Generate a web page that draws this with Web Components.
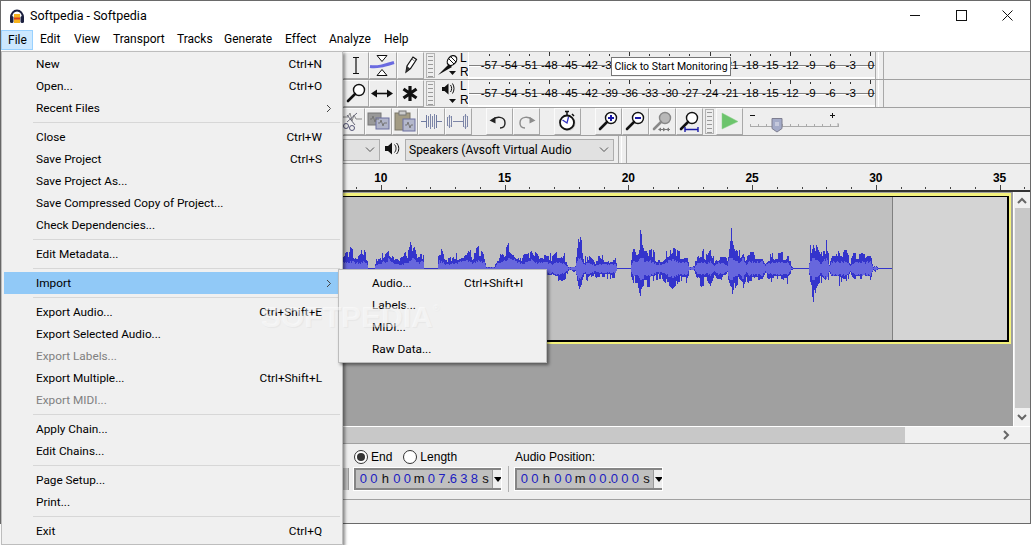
<!DOCTYPE html>
<html lang="en">

<head>
  <meta charset="UTF-8">
  <title>Softpedia - Softpedia</title>
  <style>
    html, body { margin: 0; background: #fff; height: 545px; overflow: hidden; }
    audio-window { font-family: Roboto, "Liberation Sans", sans-serif; }
  </style>
</head>

<body>
  <audio-window>
    <title-bar>Softpedia - Softpedia</title-bar>
    <menu-bar>
      <menu-title w="32" active>File</menu-title>
      <menu-title w="34">Edit</menu-title>
      <menu-title w="39">View</menu-title>
      <menu-title w="64">Transport</menu-title>
      <menu-title w="47">Tracks</menu-title>
      <menu-title w="61">Generate</menu-title>
      <menu-title w="44">Effect</menu-title>
      <menu-title w="55">Analyze</menu-title>
      <menu-title w="40">Help</menu-title>
    </menu-bar>

    <tool-row first>
      <tool-btn icon="ibeam" w="26"></tool-btn>
      <tool-btn icon="envelope" w="28"></tool-btn>
      <tool-btn icon="pencil" w="27"></tool-btn>
      <tool-grip></tool-grip>
      <meter-source icon="mic"></meter-source>
      <level-meter hide="-36,-33,-30,-27,-24"></level-meter>
      <tool-divider></tool-divider>
    </tool-row>
    <tool-row>
      <tool-btn icon="zoom" w="26"></tool-btn>
      <tool-btn icon="shift" w="28"></tool-btn>
      <tool-btn icon="multi" w="27"></tool-btn>
      <tool-grip></tool-grip>
      <meter-source icon="speaker"></meter-source>
      <level-meter></level-meter>
      <tool-divider></tool-divider>
    </tool-row>
    <tool-row>
      <tool-btn icon="cut" w="22"></tool-btn>
      <tool-btn icon="copy" w="27"></tool-btn>
      <tool-btn icon="paste" w="26"></tool-btn>
      <tool-btn icon="trim" w="27"></tool-btn>
      <tool-btn icon="silence" w="27"></tool-btn>
      <tool-btn icon="undo" w="27" gap="14"></tool-btn>
      <tool-btn icon="redo" w="27"></tool-btn>
      <tool-btn icon="timer" w="27" gap="14"></tool-btn>
      <tool-btn icon="zoomin" w="27" gap="14"></tool-btn>
      <tool-btn icon="zoomout" w="27"></tool-btn>
      <tool-btn icon="fitsel" w="27"></tool-btn>
      <tool-btn icon="fitproj" w="27"></tool-btn>
      <tool-grip></tool-grip>
      <tool-btn icon="play" w="27"></tool-btn>
      <speed-slider></speed-slider>
    </tool-row>
    <tool-row>
      <device-combo w="37"></device-combo>
      <tool-btn icon="speakersmall" w="25" flat></tool-btn>
      <device-combo w="209">Speakers (Avsoft Virtual Audio</device-combo>
      <tool-divider wide></tool-divider>
    </tool-row>

    <time-ruler></time-ruler>
    <track-panel></track-panel>
    <h-scroll></h-scroll>
    <selection-bar></selection-bar>
    <status-bar></status-bar>

    <click-tip>Click to Start Monitoring</click-tip>

    <popup-menu x="1" y="51" w="342" h="494" pad="1">
      <menu-item key="Ctrl+N">New</menu-item>
      <menu-item key="Ctrl+O">Open...</menu-item>
      <menu-item sub>Recent Files</menu-item>
      <menu-sep></menu-sep>
      <menu-item key="Ctrl+W">Close</menu-item>
      <menu-item key="Ctrl+S">Save Project</menu-item>
      <menu-item>Save Project As...</menu-item>
      <menu-item>Save Compressed Copy of Project...</menu-item>
      <menu-item>Check Dependencies...</menu-item>
      <menu-sep></menu-sep>
      <menu-item>Edit Metadata...</menu-item>
      <menu-sep></menu-sep>
      <menu-item sub active>Import</menu-item>
      <menu-sep></menu-sep>
      <menu-item key="Ctrl+Shift+E">Export Audio...</menu-item>
      <menu-item>Export Selected Audio...</menu-item>
      <menu-item disabled>Export Labels...</menu-item>
      <menu-item key="Ctrl+Shift+L">Export Multiple...</menu-item>
      <menu-item disabled>Export MIDI...</menu-item>
      <menu-sep></menu-sep>
      <menu-item>Apply Chain...</menu-item>
      <menu-item>Edit Chains...</menu-item>
      <menu-sep></menu-sep>
      <menu-item>Page Setup...</menu-item>
      <menu-item>Print...</menu-item>
      <menu-sep></menu-sep>
      <menu-item key="Ctrl+Q">Exit</menu-item>
    </popup-menu>

    <popup-menu x="338" y="269" w="209" h="94" pad="2">
      <menu-item key="Ctrl+Shift+I" indent="31" keyx="122">Audio...</menu-item>
      <menu-item indent="31">Labels...</menu-item>
      <menu-item indent="31">MIDI...</menu-item>
      <menu-item indent="31">Raw Data...</menu-item>
    </popup-menu>

    <water-mark>SOFTPEDIA</water-mark>
  </audio-window>

  <script>
    const ARIAL = '"Liberation Sans", Arial, sans-serif'

    function shadow(el, css, html) {
      const root = el.attachShadow({ mode: 'open' })
      root.innerHTML = '<style>' + css + '</style>' + html
      return root
    }

    // toolbar pictures, drawn in a 26x27 box
    const glass = (c, fill) => `<circle cx="16" cy="10" r="5.5" fill="${fill || '#fff'}" stroke="${c}" stroke-width="1.4"/><path d="M12 14L5 21" stroke="${c}" stroke-width="2.6" stroke-linecap="round"/>`
    const ICONS = {
      ibeam: '<path d="M10 5.5h6M13 5.5v16M10 21.5h6" stroke="#111" stroke-width="1.2" fill="none"/>',
      envelope: '<path d="M8 3.5h10l-5 6zM8 23.5h10l-5-6z" fill="#fff" stroke="#111"/><path d="M1 14.5c8 1 14-1 24-4" stroke="#6a6ae0" stroke-width="3" fill="none"/>',
      pencil: '<path d="M9 20l1-6 6-9 3.500 2.500-6 9z" fill="#fff" stroke="#111" stroke-width="1.2"/><path d="M9 20l4-3.500-3-2.500z" fill="#333"/><path d="M15 7l3 2.500" stroke="#777"/>',
      zoom: glass('#111'),
      shift: '<path d="M6 13.500h14" stroke="#111" stroke-width="1.6"/><path d="M2 13.500l6-4v8zM24 13.500l-6-4v8z" fill="#111"/>',
      multi: '<path d="M13 6v15M6.500 9l13 9M19.500 9l-13 9" stroke="#111" stroke-width="3.200"/>',
      cut: '<path d="M0 9h5l2-4 2 8 2-6 2 4h6" stroke="#888" fill="none"/><path d="M4 14l10-9M4 7l8 10" stroke="#667" /><circle cx="3" cy="18" r="2.500" fill="none" stroke="#557"/><circle cx="9" cy="20" r="2.500" fill="none" stroke="#557"/>',
      copy: '<rect x="3" y="5" width="13" height="12" fill="#999" stroke="#777"/><rect x="11" y="10" width="13" height="11" fill="#b0b4c8" stroke="#6a6fa0"/><path d="M5 11h2l1-3 2 6 1-3h3M13 15h2l1-3 2 6 1-3h3" stroke="#777" fill="none"/>',
      paste: '<rect x="3" y="5" width="15" height="17" fill="#a39c84" stroke="#7a7668"/><rect x="7" y="3" width="7" height="4" fill="#ccc" stroke="#777"/><rect x="11" y="11" width="12" height="12" fill="#b4b8cc" stroke="#6a6fa0"/><path d="M13 17h2l1-3 2 6 1-3h2" stroke="#777" fill="none"/>',
      trim: '<path d="M3 13.500h5M19 13.500h5M8.500 7v13M18.500 7v13" stroke="#6f7aa0" fill="none"/><path d="M10.500 8v11M12.500 6v15M14.500 8v11M16.500 6v15" stroke="#7d86a8" fill="none"/>',
      silence: '<path d="M2.500 9v9M4.500 7v13M6.500 8v11M8 13.500h10M18.500 8v11M20.500 6v15M22.500 8v11" stroke="#7d86a8" fill="none"/><path d="M3.500 9h2M19.500 8h2M3.500 18h2M19.500 19h2" stroke="#7d86a8"/>',
      undo: '<path d="M6 12c4-4 13-4 13 3 0 3-2 5-5 5" stroke="#222" stroke-width="1.400" fill="none"/><path d="M3.500 12.500l6-3.500v6.500z" fill="#222"/>',
      redo: '<path d="M20 12c-4-4-13-4-13 3 0 3 2 5 5 5" stroke="#8c8c8c" stroke-width="1.400" fill="none"/><path d="M22.500 12.500l-6-3.500v6.500z" fill="#8c8c8c"/>',
      timer: '<circle cx="14" cy="15.500" r="7.500" fill="#aaa" opacity=".5"/><circle cx="13" cy="14.500" r="7" fill="#fff" stroke="#111" stroke-width="1.800"/><path d="M11 3.500h4M13 4v3M18 6l2 2" stroke="#111" stroke-width="1.500"/><path d="M8.500 12l4.500 3 1.500-6" stroke="#3030c0" stroke-width="1.300" fill="none"/>',
      zoomin: glass('#111') + '<path d="M13 10h6M16 7v6" stroke="#1818a8" stroke-width="2"/>',
      zoomout: glass('#111') + '<path d="M13 10h6" stroke="#1818a8" stroke-width="2"/>',
      fitsel: glass('#888', '#b8b8b8') + '<path d="M10 21.500h11" stroke="#777"/><path d="M9 21.500l3-2v4zM17 21.500l-3-2v4zM17 21.500l3-2v4z" fill="#777"/>',
      fitproj: glass('#111') + '<path d="M9 21.500h13M9 19v5M22 19v5" stroke="#1818a8" stroke-width="1.400"/>',
      play: '<path d="M6 5l16 8.500L6 21z" fill="#6cc46c" stroke="#8bd08b" stroke-width=".5"/>',
      speakersmall: '<path d="M6 11h3l4-3.500v12L9 16H6z" fill="#111"/><path d="M15.500 9.500c2 2 2 6 0 8M17.500 8c3 3 3 8 0 11" stroke="#111" fill="none"/>',
      mic: '<path d="M1 23l11-11 3 3z" fill="#111"/><ellipse cx="15" cy="8.500" rx="4" ry="5.500" transform="rotate(42 15 8.500)" fill="#fff" stroke="#111" stroke-width="1.300"/><path d="M12 7l5 5M14 5l5 5" stroke="#111"/><path d="M12 19h7l-3.500 4z" fill="#111"/>',
      speaker: '<path d="M5 7h2.500l4-3.500v11L7.500 11H5z" fill="#111"/><path d="M13.500 5c1.500 2 1.500 5 0 7M15.500 3.500c2 3 2 7 0 10" stroke="#111" fill="none"/><path d="M12 19h7l-3.500 4z" fill="#111"/>'
    }

    // envelope of the recording: [x on the page, peak height]
    const ENVELOPE = [
      [343, 18], [350, 23], [358, 16], [362, 22], [367, 14], [368, 1], [374, 1], [376, 12], [381, 16], [388, 28], [394, 14],
      [400, 12], [408, 20], [412, 35], [416, 18], [423, 20], [424, 1], [437, 1], [439, 25], [445, 14], [452, 14], [458, 18],
      [467, 28], [472, 16], [478, 25], [484, 18], [486, 3], [494, 3], [497, 14], [503, 20], [509, 34], [515, 22], [522, 16],
      [531, 26], [538, 16], [545, 18], [552, 14], [558, 20], [565, 15], [568, 3], [575, 4], [578, 42], [581, 30], [584, 12], [588, 18],
      [594, 10], [598, 14], [604, 13], [615, 13], [617, 1], [630, 1], [632, 20], [637, 20], [640, 42], [644, 24], [650, 23],
      [656, 14], [662, 14], [666, 20], [673, 28], [678, 20], [687, 20], [689, 3], [694, 3], [697, 16], [701, 22], [707, 18],
      [710, 25], [714, 10], [717, 16], [724, 17], [727, 8], [729, 38], [731, 43], [734, 26], [738, 18], [743, 30], [746, 10],
      [748, 21], [762, 20], [765, 9], [768, 16], [788, 20], [791, 3], [793, 1], [808, 1], [810, 24], [813, 43], [816, 26],
      [820, 16], [826, 30], [829, 8], [832, 21], [846, 20], [850, 8], [854, 18], [870, 20], [873, 3], [876, 5], [878, 1], [892, 1]
    ]

    function envelopeAt(x) {
      for (let i = 1; i < ENVELOPE.length; i++) {
        const a = ENVELOPE[i - 1], b = ENVELOPE[i]
        if (x <= b[0]) return a[1] + (b[1] - a[1]) * (x - a[0]) / (b[0] - a[0])
      }
      return 0
    }

    class AudioWindow extends HTMLElement {
      constructor() {
        super()
        shadow(this, `:host { display: flex; flex-direction: column; position: relative; box-sizing: border-box;
          height: 524px; border: 1px solid #6a6a6a; background: #eee; color: #000; }`, '<slot></slot>')
      }
    }

    class TitleBar extends HTMLElement {
      constructor() {
        super()
        shadow(this, `:host { display: flex; align-items: center; height: 29px; background: #fff; font-size: 12.500px; flex: none; }
          .logo { margin: 0 5px 0 8px; }
          .title { flex: 1; margin-top: -1px; }
          .ctl { width: 46px; height: 29px; display: flex; align-items: center; justify-content: center; }
          .ctl svg { display: block; }`,
          `<svg class="logo" width="16" height="16" viewBox="0 0 16 16"><path d="M2 10C2 0 14 0 14 10" fill="none" stroke="#1c2140" stroke-width="2"/><rect x="1" y="8" width="3.500" height="7" rx="1.500" fill="#1c2140"/><rect x="11.500" y="8" width="3.500" height="7" rx="1.500" fill="#1c2140"/><rect x="5" y="6" width="6" height="9" fill="#f6b21c"/><path d="M5 10.500h6" stroke="#d83c1c" stroke-width="2"/></svg>
          <div class="title"><slot></slot></div>
          <div class="ctl"><svg width="11" height="11"><path d="M0 5.500h10" stroke="#111"/></svg></div>
          <div class="ctl"><svg width="11" height="11"><rect x=".5" y=".5" width="10" height="10" fill="none" stroke="#111"/></svg></div>
          <div class="ctl"><svg width="11" height="11"><path d="M.5.500l10 10M10.500.5l-10 10" stroke="#111"/></svg></div>`)
      }
    }

    class MenuBar extends HTMLElement {
      constructor() {
        super()
        shadow(this, ':host { display: flex; height: 21px; background: #fff; flex: none; }', '<slot></slot>')
      }
    }

    class MenuTitle extends HTMLElement {
      constructor() {
        super()
        const active = this.hasAttribute('active')
        shadow(this, `:host { display: block; box-sizing: border-box; height: 20px; width: ${this.getAttribute('w')}px;
            padding-left: 7px; font-size: 12px; line-height: 19px; white-space: nowrap; margin-top: 0;
            ${active ? 'background: #cce8ff; border: 1px solid #99d1ff; padding-left: 6px; line-height: 18px;' : ''} }`,
          '<slot></slot>')
      }
    }

    class ToolRow extends HTMLElement {
      constructor() {
        super()
        shadow(this, `:host { display: flex; flex: none; box-sizing: border-box; height: ${this.hasAttribute('first') ? 29 : 28}px;
            padding-left: 342px; background: #eee; border-bottom: 1px solid #a0a0a0;
            ${this.hasAttribute('first') ? 'border-top: 1px solid #b4b4b4;' : ''} }`, '<slot></slot>')
      }
    }

    class ToolBtn extends HTMLElement {
      constructor() {
        super()
        const flat = this.hasAttribute('flat')
        shadow(this, `:host { display: block; flex: none; box-sizing: border-box; height: 27px;
            width: ${this.getAttribute('w')}px; margin-left: ${this.getAttribute('gap') || 0}px;
            ${flat ? '' : 'border-top: 1px solid #fbfbfb; border-left: 1px solid #fbfbfb; border-right: 1px solid #a8a8a8; border-bottom: 1px solid #a8a8a8;'} }
            svg { display: block; margin: -1px 0 0 -1px; }`,
          `<svg width="26" height="27" viewBox="0 0 26 27">${ICONS[this.getAttribute('icon')]}</svg>`)
      }
    }

    class ToolGrip extends HTMLElement {
      constructor() {
        super()
        shadow(this, `:host { display: block; flex: none; box-sizing: border-box; width: 9px; height: 25px; margin: 1px 2px 0 2px;
            border: 1px solid #b4b4b4;
            background: repeating-linear-gradient(#eee 0 2px, #9a9a9a 2px 3px, #eee 3px 4px) 1px 0 / 5px 100% no-repeat; }`, '')
      }
    }

    class ToolDivider extends HTMLElement {
      constructor() {
        super()
        shadow(this, `:host { display: block; flex: none; box-sizing: border-box; height: 27px; width: 9px;
            margin-left: ${this.hasAttribute('wide') ? 4 : 0}px; border-left: 1px solid #a8a8a8; border-right: 1px solid #a8a8a8;
            background: linear-gradient(#fff, #fff) 2px 0 / 1px 100% no-repeat; }`, '')
      }
    }

    class MeterSource extends HTMLElement {
      constructor() {
        super()
        shadow(this, `:host { display: flex; flex: none; width: 31px; height: 27px; font: 12px ${ARIAL}; }
            svg { display: block; flex: none; }
            .lr { display: flex; flex-direction: column; justify-content: space-between; line-height: 13px; }`,
          `<svg width="23" height="27" viewBox="0 0 23 27">${ICONS[this.getAttribute('icon')]}</svg>
           <div class="lr"><span>L</span><span>R</span></div>`)
      }
    }

    class LevelMeter extends HTMLElement {
      constructor() {
        super()
        const hide = (this.getAttribute('hide') || '').split(',')
        let cells = ''
        for (let n = 57; n >= 0; n -= 3) {
          const text = n == 0 ? '0' : '-' + n
          const tall = n % 12 == 0
          cells += `<div class="cell"><i class="${tall ? 'tall' : ''}"></i><span>${hide.includes(text) ? '' : text}</span></div>`
        }
        shadow(this, `:host { display: flex; flex: none; box-sizing: border-box; width: 407px; height: 27px; padding-left: 10px;
            font: 11.500px ${ARIAL}; border-bottom: 2px solid #fff; border-left: 1px solid #fff;
            background: linear-gradient(#808080, #808080) 0 13px / 100% 1px no-repeat, linear-gradient(#fff, #fff) 0 14px / 100% 1px no-repeat; }
            .cell { flex: none; width: 20.100px; height: 25px; display: flex; flex-direction: column; align-items: center; }
            i { display: block; width: 1px; height: 2px; margin-top: 2px; background: #333; flex: none; }
            i.tall { height: 4px; margin-top: 0; }
            .cell span { line-height: 13px; margin-top: 3px; white-space: nowrap; height: 13px; }
            i.tall + span { margin-top: 3px; }`, cells)
      }
    }

    class SpeedSlider extends HTMLElement {
      constructor() {
        super()
        let ticks = ''
        for (let i = 0; i < 12; i++) ticks += `<path d="M${0.5 + i * 8} 16v3" stroke="#aaa"/>`
        shadow(this, ':host { display: block; flex: none; margin-left: 7px; width: 90px; height: 27px; } svg { display: block; }',
          `<svg width="90" height="27">
            <path d="M0 7.500h5" stroke="#111"/>
            <path d="M80 7.500h5M82.500 5v5" stroke="#111"/>
            ${ticks}
            <path d="M0 18.500h88M88 15v4" stroke="#aaa"/>
            <path d="M22 10.500h10v10l-5 3.500-5-3.500z" fill="#a4abc8" stroke="#7e7e90"/>
            <path d="M25 15h4M25 17h4" stroke="#e6e6f0"/>
          </svg>`)
      }
    }

    class DeviceCombo extends HTMLElement {
      constructor() {
        super()
        shadow(this, `:host { display: flex; align-items: center; flex: none; box-sizing: border-box; width: ${this.getAttribute('w')}px;
            height: 22px; margin-top: 3px; padding-left: 3px; background: #e1e1e1; border: 1px solid #adadad; font-size: 12px; }
            .text { flex: 1; white-space: nowrap; }
            svg { margin-right: 4px; flex: none; }`,
          `<div class="text"><slot></slot></div><svg width="10" height="6"><path d="M1 .5l4 4 4-4" fill="none" stroke="#555"/></svg>`)
      }
    }

    class TimeRuler extends HTMLElement {
      constructor() {
        super()
        let labels = '', ticks = ''
        for (let s = 10; s <= 35; s += 5) labels += `<div class="label">${s}</div>`
        for (let i = 0; i < 28; i++) ticks += `<i class="${i % 5 == 1 ? 'big' : ''}"></i>`
        shadow(this, `:host { display: flex; flex-direction: column; flex: none; box-sizing: border-box; height: 28px;
            background: #eee; border-bottom: 2px solid #333; overflow: hidden; font: bold 12px ${ARIAL}; }
            .labels { display: flex; padding-left: 318px; height: 21px; padding-top: 7px; box-sizing: border-box; }
            .label { flex: none; width: 123.750px; text-align: center; line-height: 14px; }
            .ticks { display: flex; align-items: flex-end; padding-left: 355px; height: 5px; }
            i { display: block; flex: none; width: 24.750px; height: 2px; margin-bottom: 1px; background: linear-gradient(#444, #444) 0 0 / 1px 100% no-repeat; }
            i.big { height: 5px; margin-bottom: 0; }`,
          `<div class="labels">${labels}</div><div class="ticks">${ticks}</div>`)
      }
    }

    class WaveForm extends HTMLElement {
      constructor() {
        super()
        let seed = 11
        const rnd = () => { seed = (seed * 16807) % 2147483647; return seed / 2147483647 }
        let dark = 'M343 71.500H892', light = ''
        let a = 1, b = 1
        for (let x = 343; x < 892; x++) {
          const e = envelopeAt(x)
          // hold the noise for a pixel or two so the peaks look blocky
          if (rnd() < 0.55) a = 0.45 + 0.55 * Math.pow(rnd(), 1.3)
          if (rnd() < 0.55) b = 0.35 + 0.5 * Math.pow(rnd(), 1.3)
          if (e < 2) continue
          const up = e * a
          const down = e * b
          const rms = Math.min(e * (0.25 + 0.13 * rnd()), 11)
          dark += `M${x}.5 ${(71.5 - up).toFixed(0)}V${(71.5 + down).toFixed(0)}`
          light += `M${x}.5 ${(71.5 - rms).toFixed(0)}V${(71.5 + rms).toFixed(0)}`
        }
        shadow(this, ':host { display: block; flex: none; width: 891px; height: 143px; background: #c0c0c0; border-right: 1px solid #808080; } svg { display: block; margin-left: -1px; }',
          `<svg width="892" height="143" shape-rendering="crispEdges"><path d="${dark}" stroke="#3434cc" fill="none"/><path d="${light}" stroke="#6767dd" fill="none"/></svg>`)
      }
    }

    class TrackPanel extends HTMLElement {
      constructor() {
        super()
        shadow(this, `:host { display: flex; flex: none; height: 234px; background: #a0a0a0; }
            .main { flex: 1; padding-top: 1px; }
            .frame { width: 1008px; height: 146px; border: solid #f4f27c; border-width: 3px 2px 2px 0; }
            .track { box-sizing: border-box; width: 1008px; height: 146px; display: flex; background: #d4d4d4;
               border: solid #000; border-width: 1px 2px 2px 0; }
            .scroll { flex: none; width: 16px; background: #f0f0f0; border-left: 1px solid #fff; display: flex; flex-direction: column; align-items: center; }
            .thumb { width: 15px; height: 200px; margin-top: 1px; background: #c8c8c8; }
            .arrow { flex: none; height: 16px; display: flex; align-items: center; justify-content: center; margin-top: 0; }`,
          `<div class="main"><div class="frame"><div class="track"><wave-form></wave-form></div></div></div>
           <div class="scroll">
             <div class="arrow" style="height:15px;padding-top:1px;box-sizing:border-box"><svg width="10" height="7"><path d="M1 6l4-4 4 4" fill="none" stroke="#666" stroke-width="2"/></svg></div>
             <div class="thumb"></div><div style="flex:1"></div>
             <div class="arrow" style="height:17px"><svg width="10" height="7"><path d="M1 1l4 4 4-4" fill="none" stroke="#666" stroke-width="2"/></svg></div>
           </div>`)
      }
    }

    class HScroll extends HTMLElement {
      constructor() {
        super()
        shadow(this, `:host { display: flex; flex: none; box-sizing: border-box; height: 18px; background: #f0f0f0;
            border-top: 1px solid #fff; border-bottom: 1px solid #a0a0a0; align-items: stretch; }
            .thumb { width: 904px; background: #c8c8c8; flex: none; }
            .arrow { flex: 1; display: flex; align-items: center; justify-content: flex-end; padding-right: 20px; }`,
          `<div class="thumb"></div><div class="arrow"><svg width="7" height="10"><path d="M1 1l4 4-4 4" fill="none" stroke="#666" stroke-width="2"/></svg></div>`)
      }
    }

    class TimeBox extends HTMLElement {
      constructor() {
        super()
        const widths = { h: 12.5, m: 13.5, s: 12, '.': 1 }
        const cells = this.getAttribute('value').split('').map((c) => {
          const digit = c >= '0' && c <= '9'
          return `<span class="${digit ? 'd' : 'u'}" style="width:${digit ? 10.5 : widths[c]}px">${c}</span>`
        }).join('')
        shadow(this, `:host { display: flex; flex: none; box-sizing: border-box; width: 147px; height: 22px; padding-left: 2px;
            background: #c0c0c0; border: 2px solid #858585; outline: 1px solid #fff; outline-offset: 0; font: 13px ${ARIAL}; line-height: 18px; align-items: stretch; }
            .digits { flex: 1; display: flex; }
            span { display: block; text-align: center; flex: none; }
            .d { color: #2020c0; } .u { color: #111; }
            .drop { width: 10px; flex: none; background: #eee; display: flex; align-items: center; justify-content: center; border-left: 1px solid #999; }`,
          `<div class="digits">${cells}</div><div class="drop"><svg width="8" height="5"><path d="M0 0h8L4 5z" fill="#000"/></svg></div>`)
      }
    }

    class SelectionBar extends HTMLElement {
      constructor() {
        super()
        shadow(this, `:host { display: flex; flex: none; box-sizing: border-box; height: 56px; padding-left: 342px;
            background: #eee; border-bottom: 1px solid #a0a0a0; font: 12px ${ARIAL}; }
            .sliver { flex: none; width: 5px; height: 22px; margin-top: 24px; background: #c0c0c0; border-right: 1px solid #999; margin-right: 5px; }
            .col { flex: none; display: flex; flex-direction: column; }
            .top { height: 24px; display: flex; align-items: center; gap: 2px; box-sizing: border-box; padding-top: 1px; }
            .radio { box-sizing: border-box; width: 14px; height: 14px; border-radius: 50%; border: 1px solid #333; background: #fff; display: flex; align-items: center; justify-content: center; margin-right: 1px; }
            .radio.on::after { content: ""; width: 8px; height: 8px; border-radius: 50%; background: #333; }
            .sep { flex: none; width: 1px; height: 26px; margin: 22px 6px 0 7px; background: #b0b0b0; }`,
          `<div class="sliver"></div>
           <div class="col">
             <div class="top"><span class="radio on"></span><span>End</span><span class="radio" style="margin-left:9px"></span><span>Length</span></div>
             <time-box value="00h00m07.638s"></time-box>
           </div>
           <div class="sep"></div>
           <div class="col">
             <div class="top">Audio Position:</div>
             <time-box value="00h00m00.000s"></time-box>
           </div>`)
      }
    }

    class StatusBar extends HTMLElement {
      constructor() {
        super()
        shadow(this, ':host { display: block; flex: 1; background: #eee; }', '')
      }
    }

    class ClickTip extends HTMLElement {
      constructor() {
        super()
        shadow(this, `:host { position: absolute; left: 610px; top: 56px; box-sizing: border-box; width: 120px; height: 19px; background: #fff;
            border: 1px solid #767676; font-size: 10.500px; line-height: 17px; text-align: center; white-space: nowrap; }`, '<slot></slot>')
      }
    }

    class PopupMenu extends HTMLElement {
      constructor() {
        super()
        const a = (n) => this.getAttribute(n)
        shadow(this, `:host { position: absolute; left: ${a('x') - 1}px; top: ${a('y') - 1}px; width: ${a('w')}px; height: ${a('h')}px; box-sizing: border-box;
            display: flex; flex-direction: column; padding: ${a('pad')}px 1px 0 2px; background: #f0f0f0; border: 1px solid #bdbdbd;
            box-shadow: 2px 2px 3px rgba(0,0,0,.45); font-size: 11.800px; }`, '<slot></slot>')
      }
    }

    class MenuItem extends HTMLElement {
      constructor() {
        super()
        const key = this.getAttribute('key') || ''
        const keyx = this.getAttribute('keyx')
        const indent = this.getAttribute('indent') || 32
        const active = this.hasAttribute('active')
        const sub = this.hasAttribute('sub')
        shadow(this, `:host { display: flex; align-items: center; flex: none; height: 22px; padding-left: ${indent}px; white-space: nowrap;
            color: ${this.hasAttribute('disabled') ? '#808080' : '#000'}; ${active ? 'background: #91c9f7;' : ''} }
            .label { ${keyx ? 'width:' + (keyx - indent + 1) + 'px; flex: none;' : 'flex: 1;'} }
            .key { ${keyx ? '' : 'margin-right: 19px;'} }
            .sub { margin-right: 9px; flex: none; }`,
          `<div class="label"><slot></slot></div>${key ? `<div class="key">${key}</div>` : ''}${sub ? '<svg class="sub" width="6" height="9"><path d="M1 1l3.500 3.500L1 8" fill="none" stroke="#444"/></svg>' : ''}`)
      }
    }

    class MenuSep extends HTMLElement {
      constructor() {
        super()
        shadow(this, `:host { display: block; flex: none; height: 7px; box-sizing: border-box; padding-top: 3px; margin-left: 29px; margin-right: 1px; }
            div { height: 1px; background: #d7d7d7; }`, '<div></div>')
      }
    }

    class WaterMark extends HTMLElement {
      constructor() {
        super()
        shadow(this, `:host { position: absolute; left: 260px; top: 299px; pointer-events: none; white-space: nowrap;
            font: bold 30px ${ARIAL}; color: rgba(255,255,255,.5); text-shadow: 1px 1px 1px rgba(0,0,0,.04); }
            sup { font-size: 9px; font-weight: normal; vertical-align: 16px; }`, '<slot></slot><sup>®</sup>')
      }
    }

    window.customElements.define('audio-window', AudioWindow)
    window.customElements.define('title-bar', TitleBar)
    window.customElements.define('menu-bar', MenuBar)
    window.customElements.define('menu-title', MenuTitle)
    window.customElements.define('tool-row', ToolRow)
    window.customElements.define('tool-btn', ToolBtn)
    window.customElements.define('tool-grip', ToolGrip)
    window.customElements.define('tool-divider', ToolDivider)
    window.customElements.define('meter-source', MeterSource)
    window.customElements.define('level-meter', LevelMeter)
    window.customElements.define('speed-slider', SpeedSlider)
    window.customElements.define('device-combo', DeviceCombo)
    window.customElements.define('time-ruler', TimeRuler)
    window.customElements.define('wave-form', WaveForm)
    window.customElements.define('track-panel', TrackPanel)
    window.customElements.define('h-scroll', HScroll)
    window.customElements.define('time-box', TimeBox)
    window.customElements.define('selection-bar', SelectionBar)
    window.customElements.define('status-bar', StatusBar)
    window.customElements.define('click-tip', ClickTip)
    window.customElements.define('popup-menu', PopupMenu)
    window.customElements.define('menu-item', MenuItem)
    window.customElements.define('menu-sep', MenuSep)
    window.customElements.define('water-mark', WaterMark)
  </script>
</body>

</html>
